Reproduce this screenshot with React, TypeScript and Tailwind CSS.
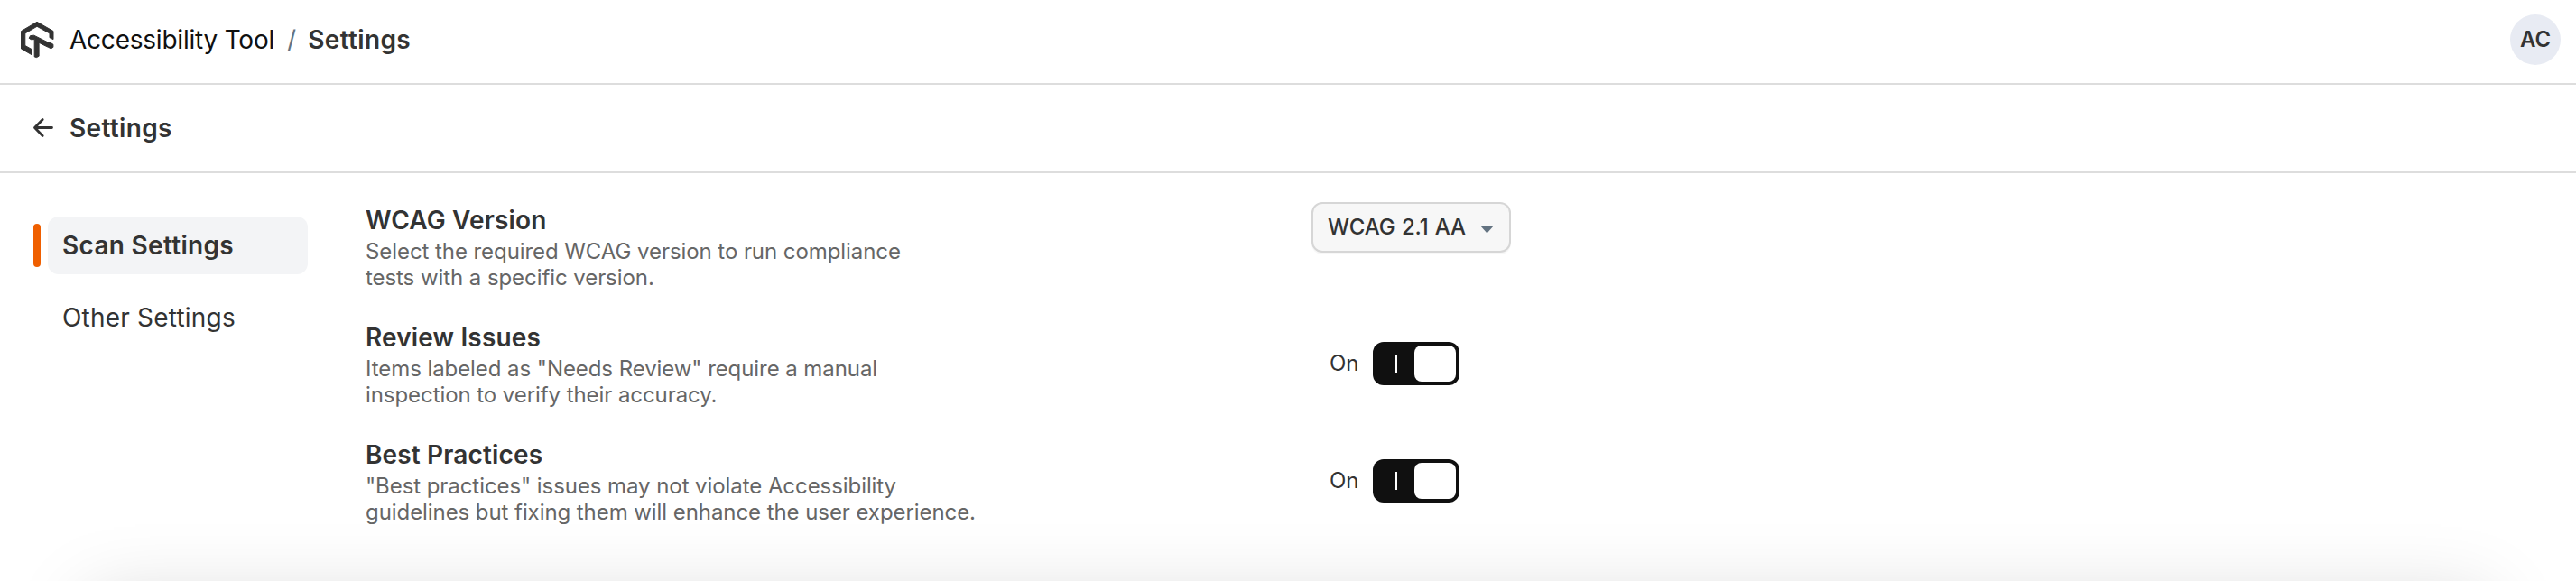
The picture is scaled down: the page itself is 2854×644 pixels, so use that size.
function Logo() {
  return (
    <svg className="block shrink-0" width="40" height="44" viewBox="0 0 40 44" fill="#333333" stroke="#333333" strokeWidth="1" strokeLinejoin="round">
      <path d="M19 2.3L37 12.5V21.6L33 19.7V15L19 7.3L5.8 15V28.5L13.3 32.7V38.8L1.5 32V12.5Z" />
      <path d="M10.2 20.3L11.6 17.6L15.6 17.2L31.5 25.1L33.8 25.3L36.9 27.2V30.3L34.6 31.8L31.6 30.4L21.1 25.3V40.2L18.6 41.6L16.2 40.9V21.6L12.3 21.7Z" />
    </svg>
  );
}

function Toggle() {
  return (
    <div className="flex h-12 items-center gap-4">
      <span className="w-8 text-2xl leading-12 whitespace-nowrap">On</span>
      <button className="flex h-12 w-24 items-center justify-end gap-[19px] rounded-xl bg-[#101010] p-1" aria-label="Toggle">
        <span className="h-5 w-[3px] bg-white" />
        <span className="h-10 w-[46px] rounded-lg bg-white" />
      </button>
    </div>
  );
}

function SettingText({ title, lines }: { title: string; lines: string[] }) {
  return (
    <div className="w-[1048px] shrink-0">
      <h2 className="mb-0.5 text-[28px] leading-9 font-semibold tracking-[0.15px]">{title}</h2>
      {lines.map((line) => (
        <p key={line} className="text-2xl leading-[29px] tracking-[-0.07px] whitespace-nowrap text-[#666666]">{line}</p>
      ))}
    </div>
  );
}

export default function App() {
  return (
    <div className="relative h-[644px] w-full overflow-hidden bg-white font-['Inter',sans-serif] text-[#333333]">
      <header className="flex h-[94px] items-center justify-between border-b-2 border-[#dddddd] pr-[17px] pb-1 pl-[22px]">
        <div className="flex items-center text-[28px] leading-9">
          <Logo />
          <span className="ml-[15px] tracking-[-0.22px] text-[#101010]">Accessibility Tool</span>
          <span className="mr-[13px] ml-[14px] text-[#637381]">/</span>
          <span className="font-semibold tracking-[0.35px]">Settings</span>
        </div>
        <div className="flex size-14 items-center justify-center rounded-full bg-[#e8ebf3] text-2xl font-semibold">AC</div>
      </header>
      <div className="flex h-[98px] items-center border-b-2 border-[#dddddd] pl-9">
        <svg className="mr-[17px] block" width="24" height="24" viewBox="0 0 24 24" fill="none" stroke="#333333" strokeWidth="2.8" strokeLinecap="round" strokeLinejoin="round">
          <path d="M21.5 11.5H2.8M11.2 2.5L2.5 11.5L11.2 20.5" />
        </svg>
        <h1 className="text-[28px] leading-9 font-semibold tracking-[0.35px]">Settings</h1>
      </div>
      <main className="flex pt-8">
        <nav className="mt-4 flex w-[341px] shrink-0 flex-col gap-4 pl-[37px] text-[28px]">
          <div className="flex items-center gap-2">
            <span className="h-12 w-2 rounded-full bg-[#ef5f00]" />
            <a className="flex h-16 flex-1 items-center rounded-xl bg-[#f3f4f6] pl-4 font-semibold tracking-[0.3px]">Scan Settings</a>
          </div>
          <a className="flex h-16 items-center pl-8 tracking-[0.2px]">Other Settings</a>
        </nav>
        <section className="ml-16 flex flex-col gap-[34px] pt-0.5">
          <div className="flex h-24">
            <SettingText title="WCAG Version" lines={['Select the required WCAG version to run compliance', 'tests with a specific version.']} />
            <button className="-mt-0.5 flex h-14 w-[221px] items-center justify-between rounded-xl border-2 border-[#d6d6d6] bg-[#f7f7f7] pr-[17px] pl-4 text-2xl font-medium tracking-[-0.1px] [word-spacing:1px] whitespace-nowrap shadow-[0_2px_0_rgba(0,0,0,0.03)]">
              WCAG 2.1 AA
              <svg className="mt-1 block" width="15" height="9" viewBox="0 0 15 9" fill="#637381"><path d="M0 0H15L7.5 8.5Z" /></svg>
            </button>
          </div>
          <div className="flex h-24">
            <SettingText title="Review Issues" lines={['Items labeled as "Needs Review" require a manual', 'inspection to verify their accuracy.']} />
            <div className="mt-[23px] ml-5"><Toggle /></div>
          </div>
          <div className="flex h-24">
            <SettingText title="Best Practices" lines={['"Best practices" issues may not violate Accessibility', 'guidelines but fixing them will enhance the user experience.']} />
            <div className="mt-[23px] ml-5"><Toggle /></div>
          </div>
        </section>
      </main>
      <div className="pointer-events-none absolute inset-x-[98px] top-[665px] h-[300px] shadow-[0_0_80px_rgba(0,0,0,0.17)]" />
    </div>
  );
}
